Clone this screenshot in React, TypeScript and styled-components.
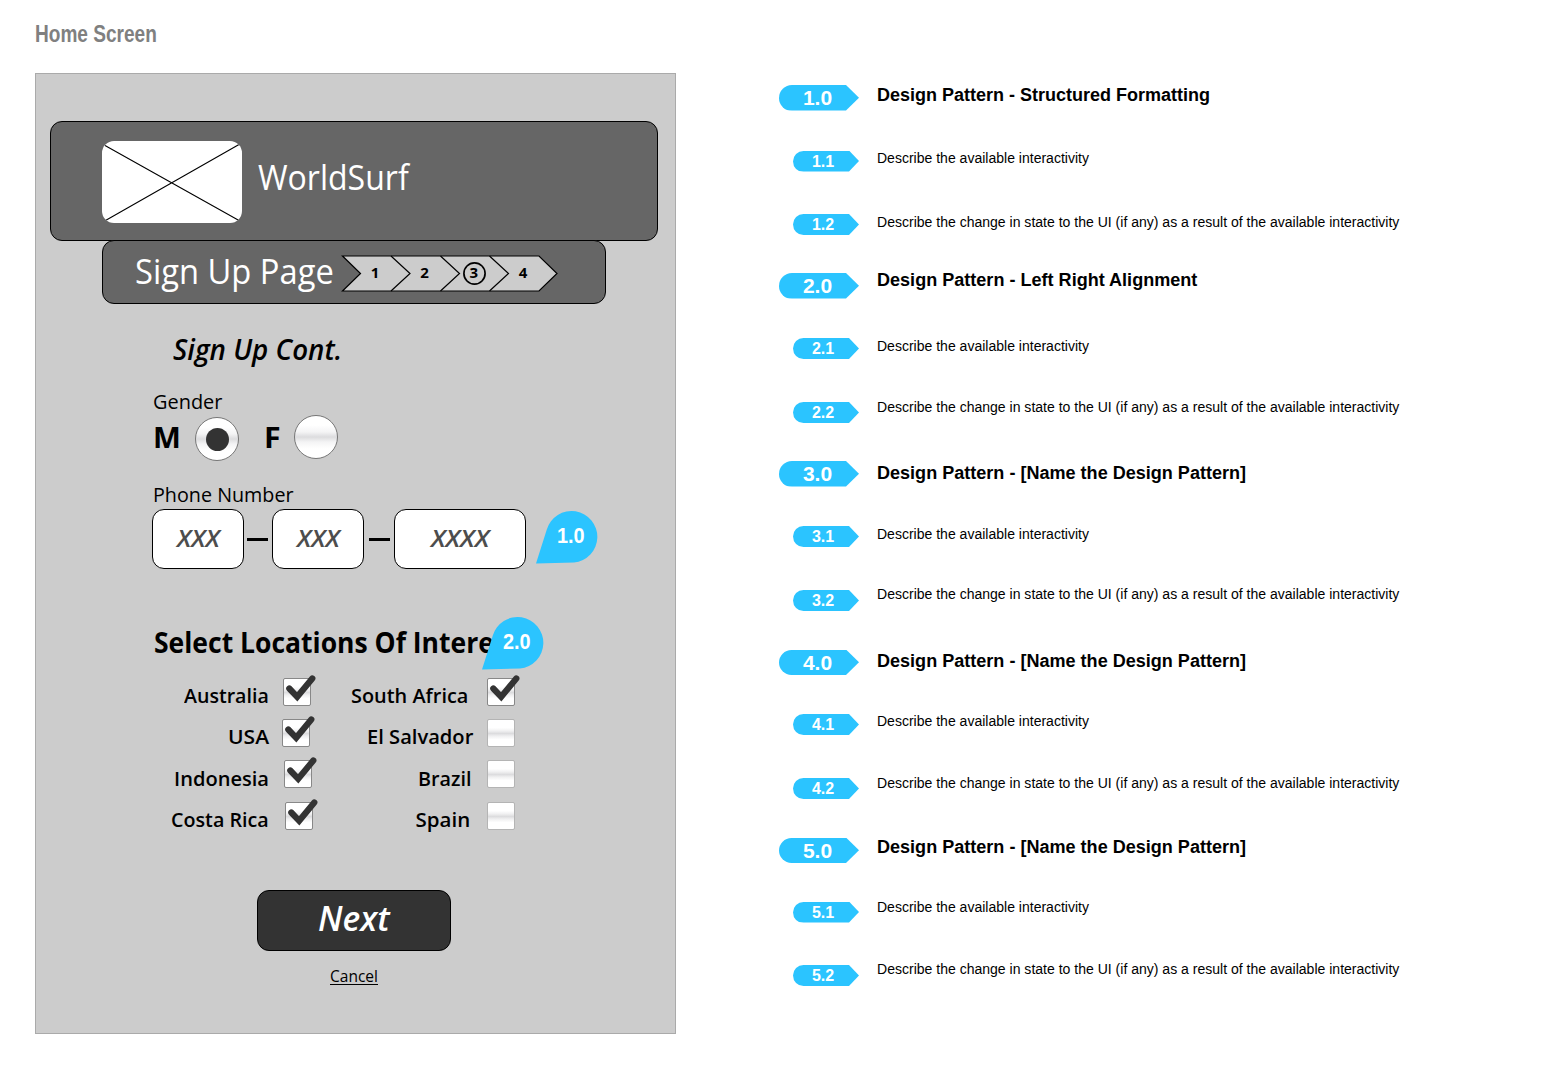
import React, { useLayoutEffect, useRef, useState } from 'react';
import styled, { createGlobalStyle, css } from 'styled-components';

const humanist = "'Open Sans', 'Noto Sans', sans-serif";
const grotesque = "'Liberation Sans', Arial, sans-serif";

const GlobalStyle = createGlobalStyle`
  body { margin: 0; background: #fff; color: #000; }
  * { box-sizing: border-box; }
`;

/* ---------- text condensed to a given measure ---------- */

type LabelStyle = {
  $size: number;
  $width: number;
  $weight?: number;
  $italic?: boolean;
  $color?: string;
  $grotesque?: boolean;
  $top?: number;
  $left?: number;
};

const LabelBox = styled.span<LabelStyle>`
  display: block;
  flex: none;
  width: ${p => p.$width}px;
  height: ${p => p.$size}px;
  margin-top: ${p => p.$top ?? 0}px;
  margin-left: ${p => p.$left ?? 0}px;
  font-family: ${p => (p.$grotesque ? grotesque : humanist)};
  font-size: ${p => p.$size}px;
  line-height: 1;
  font-weight: ${p => p.$weight ?? 400};
  font-style: ${p => (p.$italic ? 'italic' : 'normal')};
  color: ${p => p.$color ?? '#000'};
  white-space: nowrap;
`;

const LabelInk = styled.span`
  display: inline-block;
  transform-origin: 0 50%;
`;

function Label({ children, ...style }: LabelStyle & { children: string }) {
  const ink = useRef<HTMLSpanElement>(null);
  const [scale, setScale] = useState(1);
  useLayoutEffect(() => {
    if (ink.current) setScale(style.$width / ink.current.offsetWidth);
  }, [children, style.$width]);
  return (
    <LabelBox {...style}>
      <LabelInk ref={ink} style={{ transform: `scaleX(${scale})` }}>{children}</LabelInk>
    </LabelBox>
  );
}

/* ---------- page ---------- */

const Page = styled.div`
  width: 1542px;
  height: 1073px;
  overflow: hidden;
  display: flex;
  flex-direction: column;
`;

const PageHeader = styled.header`
  display: flex;
  height: 73px;
  padding: 22px 0 0 34.5px;
`;

const Columns = styled.div`
  display: flex;
  align-items: flex-start;
  padding-left: 35px;
`;

const Screen = styled.main`
  flex: none;
  display: flex;
  flex-direction: column;
  width: 641px;
  height: 961px;
  border: 1px solid #aaa;
  background: #ccc;

  > * { flex-shrink: 0; }
`;

const panel = css`
  display: flex;
  align-items: flex-start;
  background: #666;
  border: 1px solid #000;
  border-radius: 12px;
`;

const Banner = styled.div`
  ${panel}
  width: 608px;
  height: 120px;
  margin: 47px 0 0 14px;
  padding: 19px 0 0 51px;
`;

const Logo = styled.div`
  width: 140px;
  height: 82px;
  border-radius: 12px;
  background: #fff;
  overflow: hidden;
`;

const StepBar = styled.div`
  ${panel}
  width: 504px;
  height: 64px;
  margin: -1px 0 0 66px;
  padding-left: 32px;
`;

const Steps = styled.div`
  position: relative;
  width: 217px;
  height: 37px;
  margin: 14px 0 0 6.5px;
`;

const StepNumbers = styled.div`
  position: absolute;
  inset: 0;
  display: flex;
  padding-left: 10px;
`;

const StepNumber = styled.span`
  width: 49.3px;
  text-align: center;
  font: 700 15px/35px ${humanist};
`;

const Form = styled.form`
  display: flex;
  flex-direction: column;
  padding-left: 116px;
`;

const Line = styled.div<{ $height: number }>`
  display: flex;
  align-items: flex-start;
  height: ${p => p.$height}px;
`;

const Radio = styled.span<{ $top: number; $left: number }>`
  display: flex;
  align-items: center;
  justify-content: center;
  flex: none;
  width: 44px;
  height: 44px;
  margin: ${p => p.$top}px 0 0 ${p => p.$left}px;
  border: 1px solid #777;
  border-radius: 50%;
  background: linear-gradient(#fff 22%, #f4f4f5 38%, #dcdcde 50%, #f4f4f5 62%, #fff 78%);
`;

const Dot = styled.span`
  width: 23px;
  height: 23px;
  border-radius: 50%;
  background: #333;
`;

const Field = styled.div<{ $width: number }>`
  display: flex;
  justify-content: center;
  width: ${p => p.$width}px;
  height: 60px;
  border: 1px solid #000;
  border-radius: 12px;
  background: #fff;
`;

const Dash = styled.span<{ $before: number; $after: number }>`
  width: 21px;
  height: 3px;
  margin: 29px ${p => p.$after}px 0 ${p => p.$before}px;
  background: #000;
`;

const PinBox = styled.div<{ $over?: boolean }>`
  position: ${p => (p.$over ? 'absolute' : 'relative')};
  ${p => (p.$over ? 'left: 330px; top: -12px;' : 'margin: 2px 0 0 10px;')}
  width: 62px;
  height: 53px;
`;

const PinText = styled.span`
  position: absolute;
  left: 21px;
  top: 14px;
`;

const Heading = styled.div`
  position: relative;
  display: flex;
  height: 49px;
`;

const CheckRow = styled.div`
  display: grid;
  grid-template-columns: 117px 83px 121px 44px;
  height: 41.2px;
`;

const CheckLabel = styled.div<{ $shift: number }>`
  display: flex;
  justify-content: flex-end;
  padding-right: ${p => p.$shift}px;
`;

const CheckCell = styled.div<{ $left: number }>`
  padding-left: ${p => p.$left}px;
`;

const Box = styled.span<{ $on?: boolean }>`
  display: block;
  width: 28px;
  height: 28px;
  border: 1px solid ${p => (p.$on ? '#888' : '#b4b4b4')};
  border-radius: 2px;
  background: linear-gradient(#fff 30%, #f0f0f1 42%, #dcdcde 52%, #f0f0f1 62%, #fff 75%);

  svg { display: block; overflow: visible; margin: -1px; }
`;

const NextButton = styled.button`
  display: flex;
  justify-content: center;
  align-items: flex-start;
  width: 194px;
  height: 61px;
  margin: 47.2px 0 0 221px;
  padding: 0;
  border: 1px solid #000;
  border-radius: 12px;
  background: #333;
`;

const Cancel = styled.a`
  align-self: flex-start;
  margin: 17px 0 0 294px;
  border-bottom: 1px solid #000;
  height: 17px;
`;

/* ---------- annotations ---------- */

const Notes = styled.aside`
  margin: 12px 0 0 103px;
`;

const Note = styled.div<{ $height: number }>`
  display: grid;
  grid-template-columns: 80px auto;
  column-gap: 18px;
  align-items: start;
  height: ${p => p.$height}px;
`;

const Tag = styled.div<{ $major: boolean }>`
  justify-self: end;
  display: flex;
  justify-content: center;
  width: ${p => (p.$major ? 80 : 66)}px;
  height: ${p => (p.$major ? 25.5 : 21)}px;
  padding-right: ${p => (p.$major ? 3 : 6)}px;
  border-radius: 13px 0 0 13px;
  background: #2bc4ff;
  clip-path: ${p => (p.$major
    ? 'polygon(0 0, 67px 0, 100% 50%, 67px 100%, 0 100%)'
    : 'polygon(0 0, 56px 0, 100% 50%, 56px 100%, 0 100%)')};
  color: #fff;
  font: 700 ${p => (p.$major ? 21 : 16)}px/${p => (p.$major ? 26 : 21)}px ${grotesque};
`;

/* ---------- drawings ---------- */

const Pin = ({ children, over }: { children: string; over?: boolean }) => (
  <PinBox $over={over}>
    <svg width="62" height="53" viewBox="0 0 62 53">
      <path d="M0 52.4 L10.8 18.5 A25.8 25.8 0 1 1 38 51.5 Z" fill="#2bc4ff" />
    </svg>
    <PinText>
      <Label $size={22} $width={28} $weight={700} $color="#fff" $grotesque>{children}</Label>
    </PinText>
  </PinBox>
);

const Check = ({ on }: { on: boolean }) => (
  <Box $on={on}>
    {on && (
      <svg width="28" height="28" viewBox="0 0 28 28">
        <path d="M6.3 10.5 L14.2 18.8 L29.3 0.5" fill="none" stroke="#333" strokeWidth="6.2" strokeLinecap="round" />
      </svg>
    )}
  </Box>
);

/* ---------- data ---------- */

type Place = { name: string; width: number; shift: number; left: number; on: boolean };

const places: [Place, Place][] = [
  [{ name: 'Australia', width: 85, shift: -0.5, left: 14, on: true }, { name: 'South Africa', width: 117.5, shift: 4.5, left: 14, on: true }],
  [{ name: 'USA', width: 41, shift: 0, left: 13, on: true }, { name: 'El Salvador', width: 106, shift: 0, left: 14, on: false }],
  [{ name: 'Indonesia', width: 95, shift: -0.5, left: 15, on: true }, { name: 'Brazil', width: 54, shift: 1, left: 14, on: false }],
  [{ name: 'Costa Rica', width: 98, shift: -0.5, left: 16, on: true }, { name: 'Spain', width: 55, shift: 2.5, left: 14, on: false }],
];

const available = 'Describe the available interactivity';
const change = 'Describe the change in state to the UI (if any) as a result of the available interactivity';
const unnamed = 'Design Pattern - [Name the Design Pattern]';

type Entry = { id: string; text: string; width: number; height: number; top: number };

const entries: Entry[] = [
  { id: '1.0', text: 'Design Pattern - Structured Formatting', width: 333, height: 65.5, top: 1 },
  { id: '1.1', text: available, width: 212.3, height: 63.5, top: 0 },
  { id: '1.2', text: change, width: 522, height: 59, top: 1 },
  { id: '2.0', text: 'Design Pattern - Left Right Alignment', width: 320, height: 65, top: -2 },
  { id: '2.1', text: available, width: 212.3, height: 64, top: 1 },
  { id: '2.2', text: change, width: 522, height: 59, top: -2 },
  { id: '3.0', text: unnamed, width: 369, height: 65, top: 3 },
  { id: '3.1', text: available, width: 212.3, height: 64, top: 1 },
  { id: '3.2', text: change, width: 522, height: 59.5, top: -3 },
  { id: '4.0', text: unnamed, width: 369, height: 64.5, top: 2 },
  { id: '4.1', text: available, width: 212.3, height: 64, top: 0 },
  { id: '4.2', text: change, width: 522, height: 59.5, top: -2 },
  { id: '5.0', text: unnamed, width: 369, height: 64, top: 0 },
  { id: '5.1', text: available, width: 212.3, height: 63.5, top: -2 },
  { id: '5.2', text: change, width: 522, height: 22, top: -3 },
];

export default function App() {
  return (
    <>
      <GlobalStyle />
      <Page>
        <PageHeader>
          <Label $size={24} $width={121.5} $weight={700} $color="#808080" $grotesque>Home Screen</Label>
        </PageHeader>
        <Columns>
          <Screen>
            <Banner>
              <Logo>
                <svg width="140" height="83" viewBox="0 0 140 83" stroke="#000" strokeWidth="1.1">
                  <path d="M3 4.5 L137 79.5 M3.5 79.5 L137 3.5" />
                </svg>
              </Logo>
              <Label $size={35} $width={151} $color="#fff" $top={18} $left={16}>WorldSurf</Label>
            </Banner>
            <StepBar>
              <Label $size={35} $width={199} $color="#fff" $top={12}>Sign Up Page</Label>
              <Steps>
                <svg width="217" height="37" viewBox="0 0 217 37" fill="#ccc" stroke="#000" strokeWidth="1.2">
                  <path d="M1.5 1 H198 L216 18.5 L198 36 H1.5 L19.5 18.5 Z" />
                  <path d="M50 1 L69 18.5 L50 36 M99.5 1 L118.5 18.5 L99.5 36 M148.5 1 L167.5 18.5 L148.5 36" fill="none" />
                  <circle cx="133.5" cy="18.5" r="10.6" fill="none" strokeWidth="1.7" />
                </svg>
                <StepNumbers>
                  {['1', '2', '3', '4'].map(n => <StepNumber key={n}>{n}</StepNumber>)}
                </StepNumbers>
              </Steps>
            </StepBar>
            <Form>
              <Line $height={88}>
                <Label $size={29} $width={169} $weight={650} $italic $top={30} $left={21}>Sign Up Cont.</Label>
              </Line>
              <Line $height={20}>
                <Label $size={20.5} $width={69} $left={1} $top={-1}>Gender</Label>
              </Line>
              <Line $height={70}>
                <Label $size={28.5} $width={28} $weight={700} $top={11} $left={1}>M</Label>
                <Radio $top={5} $left={14}><Dot /></Radio>
                <Label $size={28.5} $width={17} $weight={700} $top={11} $left={25}>F</Label>
                <Radio $top={3} $left={13} />
              </Line>
              <Line $height={27}>
                <Label $size={20.5} $width={140.5} $top={2} $left={1}>Phone Number</Label>
              </Line>
              <Line $height={120}>
                <Field $width={92}>
                  <Label $size={24} $width={43} $weight={600} $italic $color="#4d4d4d" $top={16}>XXX</Label>
                </Field>
                <Dash $before={3} $after={4} />
                <Field $width={92}>
                  <Label $size={24} $width={43} $weight={600} $italic $color="#4d4d4d" $top={16}>XXX</Label>
                </Field>
                <Dash $before={5} $after={4} />
                <Field $width={132}>
                  <Label $size={24} $width={58} $weight={600} $italic $color="#4d4d4d" $top={16}>XXXX</Label>
                </Field>
                <Pin>1.0</Pin>
              </Line>
              <Heading>
                <Label $size={29} $width={340} $weight={700} $left={1.5} $top={-2}>Select Locations Of Intere</Label>
                <Pin over>2.0</Pin>
              </Heading>
              {places.map(row => (
                <CheckRow key={row[0].name}>
                  {row.map(p => (
                    <React.Fragment key={p.name}>
                      <CheckLabel $shift={p.shift}>
                        <Label $size={20.5} $width={p.width} $weight={650} $top={7.3}>{p.name}</Label>
                      </CheckLabel>
                      <CheckCell $left={p.left}><Check on={p.on} /></CheckCell>
                    </React.Fragment>
                  ))}
                </CheckRow>
              ))}
            </Form>
            <NextButton type="button">
              <Label $size={35} $width={72} $weight={650} $italic $color="#fff" $top={9}>Next</Label>
            </NextButton>
            <Cancel>
              <Label $size={16.5} $width={48}>Cancel</Label>
            </Cancel>
          </Screen>
          <Notes>
            {entries.map(e => {
              const major = e.id.endsWith('.0');
              return (
                <Note key={e.id} $height={e.height}>
                  <Tag $major={major}>{e.id}</Tag>
                  <Label $size={major ? 18 : 14} $width={e.width} $weight={major ? 700 : 400} $grotesque $top={e.top}>
                    {e.text}
                  </Label>
                </Note>
              );
            })}
          </Notes>
        </Columns>
      </Page>
    </>
  );
}
